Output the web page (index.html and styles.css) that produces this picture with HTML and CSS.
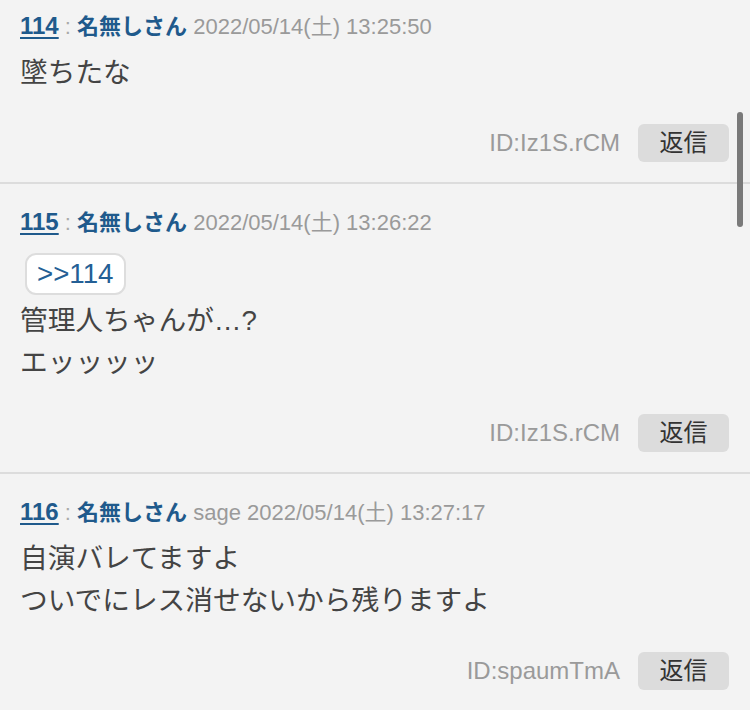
FILE: index.html
```html
<!DOCTYPE html>
<html lang="ja">
<head>
<meta charset="utf-8">
<title>スレッド</title>
<link rel="stylesheet" href="styles.css">
</head>
<body>
<div class="thread">
  <article class="post">
    <div class="post-head"><a class="post-num" href="#">114</a> <span class="sep">:</span> <span class="post-name">名無しさん</span> <span class="post-date">2022/05/14(土) 13:25:50</span></div>
    <div class="post-body">
      <p class="line">墜ちたな</p>
    </div>
    <div class="post-foot"><span class="post-id">ID:Iz1S.rCM</span><button class="reply-btn">返信</button></div>
  </article>
  <article class="post">
    <div class="post-head"><a class="post-num" href="#">115</a> <span class="sep">:</span> <span class="post-name">名無しさん</span> <span class="post-date">2022/05/14(土) 13:26:22</span></div>
    <div class="post-body">
      <a class="anchor" href="#">&gt;&gt;114</a>
      <p class="line">管理人ちゃんが…?</p>
      <p class="line">エッッッッ</p>
    </div>
    <div class="post-foot"><span class="post-id">ID:Iz1S.rCM</span><button class="reply-btn">返信</button></div>
  </article>
  <article class="post">
    <div class="post-head"><a class="post-num" href="#">116</a> <span class="sep">:</span> <span class="post-name">名無しさん</span> <span class="post-date">sage 2022/05/14(土) 13:27:17</span></div>
    <div class="post-body">
      <p class="line">自演バレてますよ</p>
      <p class="line">ついでにレス消せないから残りますよ</p>
    </div>
    <div class="post-foot"><span class="post-id">ID:spaumTmA</span><button class="reply-btn">返信</button></div>
  </article>
</div>
<div class="scroll-thumb"></div>
</body>
</html>
```
FILE: styles.css
```css
html, body {
  margin: 0;
  padding: 0;
  background: #f3f3f3;
  overflow: hidden;
}
body {
  font-family: "Liberation Sans", "Noto Sans CJK JP", sans-serif;
  color: #444444;
}
.thread {
  margin-top: -12px;
}
.post {
  padding: 23px 21px 20px 20px;
  border-bottom: 2px solid #dcdcdc;
}
.post-head {
  font-size: 22px;
  line-height: 30px;
  height: 30px;
  white-space: nowrap;
  color: #9a9a9a;
}
.post-num {
  font-size: 24px;
  color: #1f5a8c;
  font-weight: bold;
  text-decoration: underline;
  text-decoration-thickness: 2px;
  text-underline-offset: 3px;
}
.sep {
  color: #aaaaaa;
}
.post-name {
  color: #1f5a8c;
  font-weight: bold;
}
.post-date {
  color: #9a9a9a;
}
.post-body {
  margin-top: 11px;
  font-size: 27.7px;
  line-height: 42px;
}
.line {
  margin: 0;
  white-space: nowrap;
}
.anchor {
  display: inline-block;
  margin: 5px 0 5px 5px;
  padding: 0 11px 0 10px;
  line-height: 38px;
  border: 2px solid #dddddd;
  border-radius: 11px;
  background: #ffffff;
  color: #245f95;
  text-decoration: none;
  vertical-align: top;
}
.post-foot {
  margin-top: 30px;
  display: flex;
  justify-content: flex-end;
  align-items: center;
  gap: 18px;
}
.post-id {
  font-size: 24px;
  color: #9a9a9a;
}
.reply-btn {
  height: 38px;
  width: 91px;
  padding: 0;
  border: none;
  border-radius: 6px;
  background: #dcdcdc;
  color: #333333;
  font-family: "Liberation Sans", "Noto Sans CJK JP", sans-serif;
  font-size: 24px;
  line-height: 38px;
}
.scroll-thumb {
  position: fixed;
  top: 112px;
  right: 7px;
  width: 6px;
  height: 115px;
  border-radius: 3px;
  background: #7a7a7a;
}
```
